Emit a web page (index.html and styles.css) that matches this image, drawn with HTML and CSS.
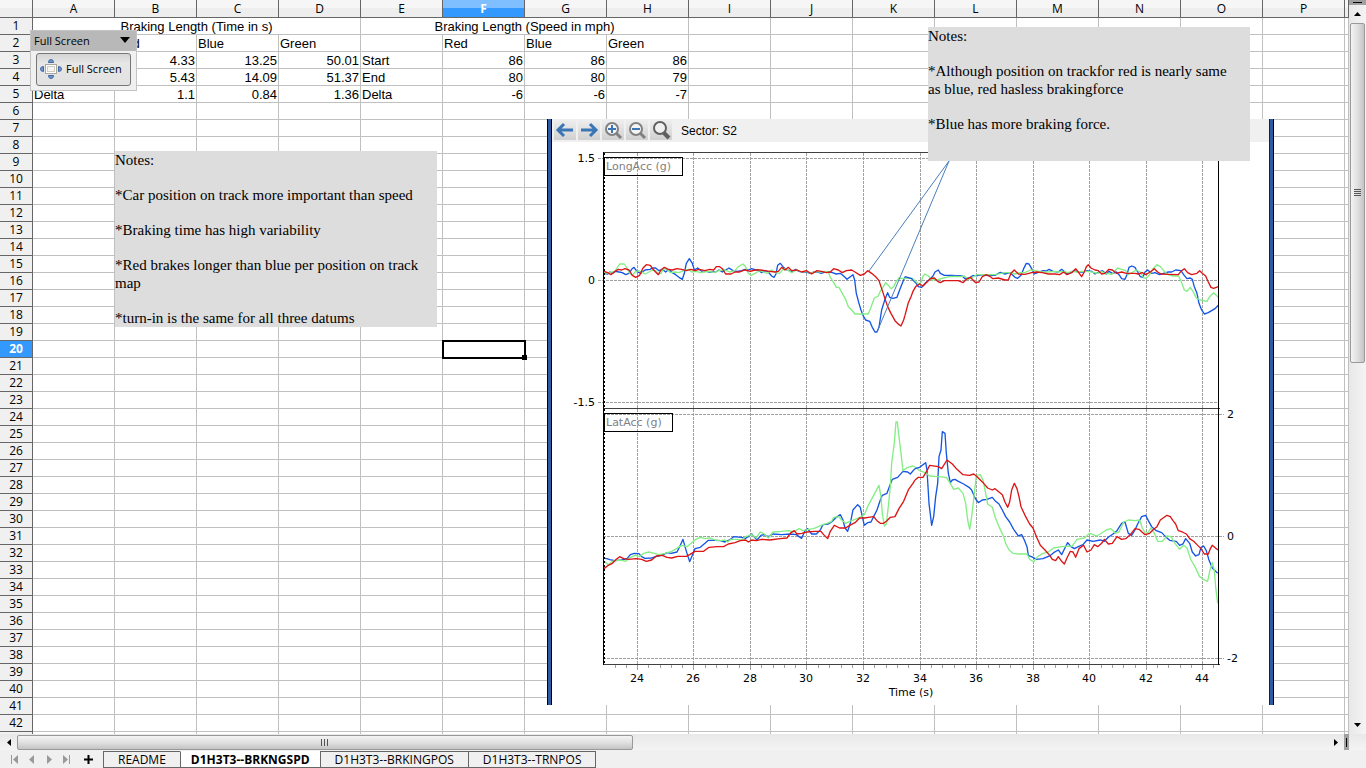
FILE: index.html
```
<!DOCTYPE html>
<html lang="en">
<head>
	<meta charset="UTF-8">
	<title>D1H3T3--BRKNGSPD</title>
	<meta name="viewport" content="width=device-width,initial-scale=1">
	<link rel="stylesheet" href="styles.css">
	<script src="sheet.js" defer></script>
</head>
<body>
	<div id="main">
		<!-- Sheet -->
		<div id="sheet">
			<table id="cells">
				<colgroup>
					<col class="head"><col><col><col><col><col><col><col><col>
					<col><col><col><col><col><col><col><col><col class="rest">
				</colgroup>
				<thead>
					<tr>
						<th></th><th>A</th><th>B</th><th>C</th><th>D</th><th>E</th><th class="current">F</th><th>G</th><th>H</th>
						<th>I</th><th>J</th><th>K</th><th>L</th><th>M</th><th>N</th><th>O</th><th>P</th><th></th>
					</tr>
				</thead>
				<tbody>
					<tr><th>1</th><td colspan="4" class="title">Braking Length (Time in s)</td><td colspan="4" class="title">Braking Length (Speed in mph)</td></tr>
					<tr><th>2</th><td></td><td>Red</td><td>Blue</td><td>Green</td><td></td><td>Red</td><td>Blue</td><td>Green</td></tr>
					<tr><th>3</th><td>Start</td><td class="num">4.33</td><td class="num">13.25</td><td class="num">50.01</td><td>Start</td><td class="num">86</td><td class="num">86</td><td class="num">86</td></tr>
					<tr><th>4</th><td>End</td><td class="num">5.43</td><td class="num">14.09</td><td class="num">51.37</td><td>End</td><td class="num">80</td><td class="num">80</td><td class="num">79</td></tr>
					<tr><th>5</th><td>Delta</td><td class="num">1.1</td><td class="num">0.84</td><td class="num">1.36</td><td>Delta</td><td class="num">-6</td><td class="num">-6</td><td class="num">-7</td></tr>
				</tbody>
			</table>

			<!-- Chart -->
			<div id="chart">
				<div class="chart-tools">
					<button aria-label="Previous"><svg width="22" height="22" viewBox="0 0 22 22"><path d="M19 11H5M10 5l-6 6 6 6" fill="none" stroke="#3a76b5" stroke-width="3"/></svg></button>
					<button aria-label="Next"><svg width="22" height="22" viewBox="0 0 22 22"><path d="M3 11h14M12 5l6 6-6 6" fill="none" stroke="#3a76b5" stroke-width="3"/></svg></button>
					<button aria-label="Zoom in"><svg width="22" height="22" viewBox="0 0 22 22"><g fill="none" stroke="#808080"><circle cx="10" cy="10" r="6" fill="#f4f4f4" stroke-width="2"/><path d="M14 14l5 5" stroke-width="3"/><path d="M6 10h8M10 6v8" stroke="#3a76b5" stroke-width="2"/></g></svg></button>
					<button aria-label="Zoom out"><svg width="22" height="22" viewBox="0 0 22 22"><g fill="none" stroke="#808080"><circle cx="10" cy="10" r="6" fill="#f4f4f4" stroke-width="2"/><path d="M14 14l5 5" stroke-width="3"/><path d="M6 10h8" stroke="#3a76b5" stroke-width="2"/></g></svg></button>
					<button aria-label="Zoom"><svg width="22" height="22" viewBox="0 0 22 22"><g fill="none" stroke="#606060"><circle cx="10" cy="9" r="6" fill="#f0f0f0" stroke-width="2"/><path d="M14 14l5 5" stroke-width="4"/></g></svg></button>
					<span>Sector: S2</span>
				</div>
				<svg class="plot" width="717" height="563" viewBox="552 142 717 563">
					<g class="grid">
						<path d="M637.5 153V664M693.5 153V664M750.5 153V664M806.5 153V664M863.5 153V664M920.5 153V664M976.5 153V664M1033.5 153V664M1089.5 153V664M1146.5 153V664M1202.5 153V664"/>
						<path d="M598 158.5H1218M598 280.5H1218M598 402.5H1218M603 414.5H1224M603 536.5H1224M603 658.5H1224"/>
					</g>
					<path class="ticks" d="M637.5 665v5M693.5 665v5M750.5 665v5M806.5 665v5M863.5 665v5M920.5 665v5M976.5 665v5M1033.5 665v5M1089.5 665v5M1146.5 665v5M1202.5 665v5"/>
					<path class="ticks" d="M615.5 665v3M626.5 665v3M648.5 665v3M660.5 665v3M671.5 665v3M682.5 665v3M705.5 665v3M716.5 665v3M727.5 665v3M739.5 665v3M761.5 665v3M773.5 665v3M784.5 665v3M795.5 665v3M818.5 665v3M829.5 665v3M841.5 665v3M852.5 665v3M874.5 665v3M886.5 665v3M897.5 665v3M908.5 665v3M931.5 665v3M942.5 665v3M954.5 665v3M965.5 665v3M988.5 665v3M999.5 665v3M1010.5 665v3M1022.5 665v3M1044.5 665v3M1055.5 665v3M1067.5 665v3M1078.5 665v3M1101.5 665v3M1112.5 665v3M1123.5 665v3M1135.5 665v3M1157.5 665v3M1168.5 665v3M1180.5 665v3M1191.5 665v3M1213.5 665v3"/>

					<!-- LongAcc, left and right half -->
					<g class="trace" transform="translate(595 250) scale(.3333)">
						<polyline class="blue" points="27,70 38,72 45,66 52,70 62,64 72,66 82,68 92,74 102,70 110,58 117,52 127,66 138,70 150,60 165,58 172,54 182,54 192,62 202,58 212,66 222,58 232,68 242,74 252,82 262,88 268,70 274,40 283,26 292,40 298,60 308,54 320,64 330,62 340,66 352,66 362,66 372,60 382,66 392,60 402,54 414,62 426,64 440,62 450,58 460,60 470,56 482,60 490,60 500,68 510,62 520,66 530,78 537,82 543,72 548,46 556,40 564,50 572,58 582,62 592,66 602,58 612,64 622,66 634,66 646,70 656,66 668,66 678,70 690,66 700,66 712,68 724,72 736,70 746,78 756,88 766,80 774,74 779,90 784,130 792,160 798,180 804,196 812,210 824,214 832,232 840,246 846,246 852,232 860,180 868,154 873,140 878,128 884,142 894,145 906,142 914,120 922,100 930,80"/>
						<polyline class="green" points="27,68 38,70 48,66 58,66 66,54 74,42 88,42 96,54 104,70 112,76 120,66 130,62 140,66 150,72 162,66 172,60 182,62 190,72 198,70 206,56 216,58 226,68 240,66 252,68 266,62 280,58 290,66 304,64 316,68 328,66 344,64 356,68 372,62 388,60 404,66 420,62 430,50 444,42 452,50 460,70 468,76 480,70 494,62 506,66 516,70 530,60 542,68 554,70 566,56 578,60 590,68 604,60 620,66 634,64 648,70 664,64 676,66 688,64 700,66 706,82 714,94 724,112 732,112 742,130 752,148 760,170 770,180 780,192 820,192 828,172 838,144 850,138 856,124 864,112 872,98 880,106 888,116 896,110 904,94 912,84 924,86 940,84 954,86"/>
						<polyline class="red" points="27,64 38,68 48,74 60,64 70,58 80,60 90,56 102,60 112,76 122,82 134,76 144,54 154,44 166,46 174,58 184,68 190,74 198,60 208,52 220,58 232,60 246,56 260,58 274,62 288,58 300,62 312,58 330,62 344,58 356,60 364,50 374,50 382,56 392,72 408,72 420,66 434,66 450,60 466,64 480,60 496,60 510,62 524,64 540,66 550,64 560,52 570,60 580,52 590,62 606,60 620,66 634,62 650,72 666,62 680,64 694,68 706,66 716,56 730,60 742,68 754,62 770,60 780,66 796,76 808,72 818,62 830,70 842,80 852,92 860,116 868,140 878,170 888,190 900,212 912,224 918,228 926,210 930,196"/>
					</g>
					<g class="trace" transform="translate(905 250) scale(.3333)">
						<polyline class="blue" points="0,80 20,86 32,98 40,110 50,112 60,100 72,90 84,78 90,66 100,60 106,70 118,76 140,76 172,78 180,86 192,84 204,77 218,77 232,74 250,77 270,76 286,67 300,72 314,68 322,74 330,82 338,85 348,76 356,56 364,40 372,42 380,56 388,72 400,67 414,62 424,63 432,58 444,64 460,66 470,58 480,66 488,72 498,68 508,62 522,66 534,66 546,62 560,64 570,72 582,66 592,62 604,72 612,64 622,70 634,66 642,74 650,86 660,88 666,74 672,52 680,48 690,52 698,66 706,80 714,82 720,66 728,60 740,70 750,68 764,74 776,70 790,66 800,66 812,60 828,62 836,74 846,86 856,84 862,88 868,110 876,130 882,160 890,180 898,192 910,188 920,182 930,176 940,166"/>
						<polyline class="green" points="24,86 34,96 40,102 48,98 54,78 60,72 70,78 80,90 100,88 116,84 132,80 150,79 166,80 178,78 190,88 206,80 214,74 240,74 270,74 300,68 314,68 330,72 344,68 360,68 376,60 390,62 410,66 430,66 450,64 460,66 474,64 490,68 500,64 516,66 530,64 545,64 560,66 578,70 590,64 602,72 612,70 620,74 630,62 638,54 650,58 662,62 670,74 684,66 694,60 706,66 716,84 724,84 734,74 744,56 756,44 766,50 778,64 790,74 804,78 820,78 828,92 838,120 846,124 856,112 864,124 874,144 886,150 906,154 914,140 926,128 940,142"/>
						<polyline class="red" points="0,196 10,158 18,140 24,124 32,110 44,102 54,108 66,96 76,86 88,84 98,94 106,98 118,92 140,92 160,92 174,98 184,88 196,82 206,92 212,98 222,96 232,80 244,74 256,80 264,86 280,84 300,90 310,90 318,70 328,60 340,72 360,73 380,68 396,66 412,68 430,72 450,72 464,74 476,66 486,74 500,68 512,56 520,66 530,80 538,66 544,50 550,44 558,54 570,60 580,62 590,72 600,70 612,58 622,60 634,70 650,66 664,70 690,70 700,72 712,68 722,74 736,66 748,56 758,66 768,72 790,73 820,74 830,62 838,56 848,68 860,74 876,70 884,62 892,70 902,78 910,96 918,112 926,115 940,110"/>
					</g>

					<!-- LatAcc, left and right half -->
					<g class="trace" transform="translate(595 400) scale(.3333)">
						<polyline class="blue" points="27,475 36,476 44,479 60,482 80,480 96,476 106,464 118,460 132,461 140,470 150,475 170,474 190,468 205,464 216,458 228,460 246,456 254,440 264,418 270,440 276,460 284,485 292,466 300,446 316,442 330,430 340,421 360,421 376,422 390,426 404,420 416,410 440,412 450,416 460,410 470,402 486,420 498,406 506,404 520,410 534,402 560,404 586,402 604,404 612,410 620,415 630,392 638,386 650,402 664,402 676,390 684,374 700,372 712,364 724,352 736,344 744,360 750,384 758,394 766,370 774,330 788,314 796,322 802,350 808,376 818,368 828,366 836,350 846,330 856,300 862,286 876,280 884,258 892,238 908,232 924,214 938,216 946,222 960,206"/>
						<polyline class="green" points="27,484 40,494 52,484 68,480 84,482 92,484 106,472 120,466 134,470 146,460 162,456 178,460 192,464 210,460 230,454 244,446 260,436 276,440 290,428 302,418 316,412 330,416 344,414 360,420 378,422 390,420 398,426 408,418 424,418 440,420 452,410 470,404 484,414 496,396 508,402 520,414 534,396 560,394 580,392 596,396 612,386 624,392 640,388 656,386 670,380 684,374 696,370 710,364 716,352 732,350 740,360 752,370 764,364 780,358 800,350 808,344 820,316 834,290 852,256 858,290 862,340 868,378 874,372 880,320 886,260 890,190 898,130 903,66 907,66 912,110 918,160 924,212 938,202 954,198 966,204 974,212"/>
						<polyline class="red" points="27,506 40,496 52,490 64,478 74,470 86,476 100,478 124,476 140,478 154,484 170,480 184,468 202,466 216,472 230,474 248,469 274,469 284,464 300,454 326,454 342,442 366,440 386,440 400,432 420,428 436,422 452,420 460,426 470,420 484,422 500,418 524,420 556,416 576,414 588,398 598,392 606,402 620,400 636,396 660,394 678,394 686,404 698,416 706,394 718,376 734,384 752,384 764,376 780,368 794,354 808,354 820,352 836,350 846,362 856,370 866,370 876,362 886,352 900,350 912,326 926,304 940,270 954,250 960,240"/>
					</g>
					<g class="trace" transform="translate(915 400) scale(.3333)">
						<polyline class="blue" points="0,206 14,202 24,194 32,188 36,210 42,310 50,376 56,350 62,290 68,250 72,170 78,150 82,95 90,100 94,160 100,220 106,248 112,240 120,238 130,244 146,252 162,262 170,270 180,294 190,308 202,300 216,298 232,292 240,302 252,312 262,330 272,350 284,366 296,388 310,408 320,404 328,420 336,440 340,466 354,472 364,478 384,476 404,468 416,458 430,450 440,464 448,448 458,428 468,440 478,446 490,440 504,434 516,420 534,424 556,420 568,424 580,412 594,402 606,392 620,370 630,366 640,400 650,406 660,390 668,372 680,350 692,346 700,362 710,380 724,392 740,398 752,410 764,421 784,424 794,436 804,432 812,416 824,430 832,456 842,468 852,464 858,442 866,438 874,452 882,480 892,504 900,512 908,520"/>
						<polyline class="green" points="14,212 30,218 44,228 70,230 94,232 106,250 116,268 130,264 144,280 152,310 158,360 164,388 170,350 178,280 184,226 196,224 204,240 212,280 218,312 232,322 240,350 252,380 266,410 272,430 282,450 294,460 310,462 336,462 344,478 356,486 366,472 380,462 400,456 416,444 440,440 472,438 486,418 508,414 524,400 544,408 556,402 574,390 588,386 602,400 612,396 626,366 640,360 660,362 674,360 682,384 692,402 700,396 708,384 718,400 728,424 742,424 756,408 768,410 780,430 794,448 806,436 816,444 828,480 840,500 854,530 868,540 878,544 884,514 892,488 898,510 902,560 908,610"/>
						<polyline class="red" points="0,240 10,232 24,232 36,212 44,196 70,200 80,206 96,180 112,192 126,208 144,224 164,226 176,222 184,228 196,240 206,250 218,264 232,270 240,266 252,276 262,284 270,306 278,322 284,306 290,270 298,250 306,266 312,290 318,320 330,346 344,372 354,384 366,414 376,436 390,450 404,466 412,478 422,482 430,470 440,484 448,492 456,474 466,454 474,456 482,472 492,446 506,436 516,456 528,450 538,434 548,440 560,430 568,418 580,432 592,430 606,410 620,418 632,416 646,404 660,386 672,388 690,404 704,400 716,388 726,380 736,360 756,346 766,350 774,362 782,372 790,392 802,396 814,402 824,416 836,424 846,434 858,446 868,462 880,462 886,446 892,436 904,446 910,450"/>
					</g>

					<path class="frame" d="M603 152.5H1219M603 408.5H1220M603 664.5H1220"/>
					<path class="axis" d="M603.5 152V665M1218.5 152V665"/>
					<path class="axis dots" d="M604.5 153V664"/>
					<rect class="label-box" x="604.5" y="157.5" width="78" height="18"/>
					<rect class="label-box" x="604.5" y="413.5" width="68" height="18"/>
					<path class="pointer" d="M949 161L869 271M949 161L877 332"/>

					<text class="label" x="606" y="170">LongAcc (g)</text>
					<text class="label" x="606" y="426">LatAcc (g)</text>
					<g text-anchor="end">
						<text x="595" y="162">1.5</text>
						<text x="595" y="284">0</text>
						<text x="595" y="406">-1.5</text>
					</g>
					<g>
						<text x="1227" y="418">2</text>
						<text x="1227" y="540">0</text>
						<text x="1227" y="662">-2</text>
					</g>
					<g text-anchor="middle">
						<text x="637" y="682">24</text>
						<text x="693" y="682">26</text>
						<text x="750" y="682">28</text>
						<text x="806" y="682">30</text>
						<text x="863" y="682">32</text>
						<text x="920" y="682">34</text>
						<text x="976" y="682">36</text>
						<text x="1033" y="682">38</text>
						<text x="1089" y="682">40</text>
						<text x="1146" y="682">42</text>
						<text x="1202" y="682">44</text>
						<text x="911" y="696">Time (s)</text>
					</g>
				</svg>
			</div>

			<!-- Notes -->
			<div class="notes" id="notes-time">
				<p>Notes:</p>
				<p>*Car position on track more important than speed</p>
				<p>*Braking time has high variability</p>
				<p>*Red brakes longer than blue per position on track map</p>
				<p>*turn-in is the same for all three datums</p>
			</div>
			<div class="notes" id="notes-force">
				<p>Notes:</p>
				<p>*Although position on trackfor red is nearly same as blue, red hasless brakingforce</p>
				<p>*Blue has more braking force.</p>
			</div>

			<!-- Full screen toolbar -->
			<div id="fullscreen">
				<button class="bar-title">Full Screen <svg width="10" height="6" viewBox="0 0 10 6"><path d="M0 0h10L5 6z"/></svg></button>
				<button class="bar-button">
					<svg width="22" height="20" viewBox="0 0 22 20">
						<g fill="#7397cb" stroke="#3f68a5">
							<path d="M8.500 3.500a2.500 3 0 0 1 5 0zM8.500 16.500a2.500 3 0 0 0 5 0zM3.500 7.500a3 2.500 0 0 0 0 5zM18.500 7.500a3 2.500 0 0 1 0 5z"/>
						</g>
						<rect x="5.500" y="5.500" width="11" height="9" fill="#fff" stroke="#aaa79c"/>
						<rect x="7.500" y="7.500" width="7" height="5" fill="#f6f6f0" stroke="#cfcdc4"/>
					</svg>
					Full Screen
				</button>
			</div>
		</div>

		<!-- Vertical scrollbar -->
		<div id="vscroll">
			<div class="split"></div>
			<button aria-label="Scroll up"><svg width="7" height="4" viewBox="0 0 7 4"><path d="M0 4l3.500-4L7 4z"/></svg></button>
			<div class="track"><div class="thumb"></div></div>
			<button aria-label="Scroll down"><svg width="7" height="4" viewBox="0 0 7 4"><path d="M0 0l3.500 4L7 0z"/></svg></button>
		</div>
	</div>

	<!-- Horizontal scrollbar -->
	<div id="hscroll">
		<button aria-label="Scroll left"><svg width="4" height="7" viewBox="0 0 4 7"><path d="M4 0L0 3.500 4 7z"/></svg></button>
		<div class="track"><div class="thumb"></div></div>
		<button aria-label="Scroll right"><svg width="4" height="7" viewBox="0 0 4 7"><path d="M0 0l4 3.500L0 7z"/></svg></button>
		<div class="split"></div>
	</div>

	<!-- Sheet tabs -->
	<div id="tabs">
		<div class="tab-nav">
			<button aria-label="First sheet"><svg width="8" height="9" viewBox="0 0 8 9"><path d="M0 0h1v9H0zM7 0v9L2 4.500z"/></svg></button>
			<button aria-label="Previous sheet"><svg width="8" height="9" viewBox="0 0 8 9"><path d="M6 0v9L1 4.500z"/></svg></button>
			<button aria-label="Next sheet"><svg width="8" height="9" viewBox="0 0 8 9"><path d="M2 0v9l5-4.500z"/></svg></button>
			<button aria-label="Last sheet"><svg width="8" height="9" viewBox="0 0 8 9"><path d="M1 0v9l5-4.500zM7 0h1v9H7z"/></svg></button>
		</div>
		<button class="add" aria-label="Add sheet"><svg width="9" height="9" viewBox="0 0 9 9"><path d="M0 4.500h9M4.500 0v9" stroke="#000" stroke-width="2"/></svg></button>
		<a href="#readme">README</a>
		<a href="#brkngspd" class="active">D1H3T3--BRKNGSPD</a>
		<a href="#brkingpos">D1H3T3--BRKINGPOS</a>
		<a href="#trnpos">D1H3T3--TRNPOS</a>
	</div>
</body>
</html>
```
FILE: styles.css
```
* {
	box-sizing: border-box;
}
body {
	margin: 0;
	height: 100vh;
	display: flex;
	flex-direction: column;
	overflow: hidden;
	background: #f0f0f0;
	color: #000;
	font: 12px "Open Sans", "Noto Sans", sans-serif;
}
button {
	border: 0;
	margin: 0;
	padding: 0;
	background: none;
	color: inherit;
	font: inherit;
	display: flex;
	align-items: center;
	justify-content: center;
}

#main {
	flex: 1;
	min-height: 0;
	display: flex;
}

/* Sheet */
#sheet {
	position: relative;
	flex: 1;
	min-width: 0;
	overflow: hidden;
	background: #fff;
}
#cells {
	width: 100%;
	table-layout: fixed;
	border-collapse: separate;
	border-spacing: 0;
}
col {
	width: 82px;
}
col.head {
	width: 33px;
}
col.rest {
	width: auto;
}
#cells th {
	height: 17px;
	padding: 0;
	border-right: solid 1px #666;
	border-bottom: solid 1px #666;
	background: #f0f0f0;
	font-weight: normal;
	line-height: 16px;
	text-align: center;
}
#cells thead th {
	height: 18px;
	background: linear-gradient(#f6f6f6 50%, #eee 50%);
}
#cells th.current {
	background: #39f;
	color: #fff;
	font-weight: bold;
}
#cells thead th.current {
	background: linear-gradient(#80bfff 50%, #39f 50%);
}
#cells td {
	height: 17px;
	padding: 2px 1px 0;
	border-right: solid 1px #c0c0c0;
	border-bottom: solid 1px #c0c0c0;
	font: 13px/14px "Liberation Sans", Arial, sans-serif;
	white-space: nowrap;
}
#cells td.title {
	text-align: center;
}
#cells td.num {
	text-align: right;
}
#cells td.cursor {
	position: relative;
	outline: solid 2px #000;
	outline-offset: -1px;
}
#cells td.cursor::after {
	content: "";
	position: absolute;
	right: -3px;
	bottom: -3px;
	width: 5px;
	height: 5px;
	background: #000;
}

/* Chart */
#chart {
	position: absolute;
	left: 547px;
	top: 119px;
	width: 727px;
	padding: 0 5px;
	background:
		linear-gradient(90deg, #000 1px, #2f5ba3 1px 4px, #000 4px) left / 5px 100% no-repeat,
		linear-gradient(90deg, #0c2348 1px, #2f5ba3 1px 4px, #000 4px) right / 5px 100% no-repeat,
		#fff;
}
.chart-tools {
	display: flex;
	gap: 2px;
	height: 23px;
	padding-left: 2px;
	background: #f0f0f0;
}
.chart-tools button {
	width: 22px;
	height: 21px;
	background: linear-gradient(#f0f0f0, #d0d0d0);
}
.chart-tools span {
	margin-left: 7px;
	font: 12px/25px "Liberation Sans", Arial, sans-serif;
}
.plot {
	display: block;
	font: 11px "DejaVu Sans", Verdana, sans-serif;
}
.grid path {
	fill: none;
	stroke: #a0a0a0;
	stroke-dasharray: 3 1;
}
.ticks {
	stroke: #a0a0a0;
}
.trace polyline {
	fill: none;
	stroke-width: 4;
	stroke-linejoin: round;
}
.trace .blue { stroke: #1455e6; }
.trace .green { stroke: #84ee84; }
.trace .red { stroke: #dc1414; }
.frame {
	stroke: #404040;
}
.axis {
	stroke: #000;
}
.dots {
	stroke-dasharray: 2 2;
}
.label-box {
	fill: none;
	stroke: #000;
}
.label {
	fill: #808080;
}
.pointer {
	fill: none;
	stroke: #4a7ebb;
}

/* Notes */
.notes {
	position: absolute;
	width: 322px;
	padding-right: 12px;
	background: #ddd;
	font: 15px/18px "Liberation Serif", "Times New Roman", serif;
}
.notes p {
	margin: 0 0 17px;
}
.notes p:last-child {
	margin: 0;
}
#notes-time {
	left: 115px;
	top: 151px;
}
#notes-force {
	left: 928px;
	top: 27px;
	padding-bottom: 28px;
}

/* Full screen toolbar */
#fullscreen {
	position: absolute;
	left: 30px;
	top: 30px;
	border: solid 1px #c4c4c4;
	background: #f0f0f0;
}
#fullscreen .bar-title {
	width: 100%;
	height: 20px;
	gap: 8px;
	padding: 0 6px 2px 3px;
	justify-content: space-between;
	background: #b8b8b8;
	font-size: 11px;
}
#fullscreen .bar-button {
	height: 33px;
	margin: 2px 5px 4px;
	padding: 0 8px 2px 3px;
	gap: 4px;
	border: solid 1px #777;
	border-radius: 3px;
	background: linear-gradient(#d4d4d4, #e6e6e6 30%, #e2e2e2);
	font-size: 11px;
}

/* Scrollbars */
#vscroll {
	width: 17px;
	display: flex;
	flex-direction: column;
	background: linear-gradient(90deg, #e8e8e8, #f4f4f4);
}
#vscroll .split {
	height: 5px;
	background: linear-gradient(#000, #000) center / 9px 1px no-repeat, #a0a0a0;
}
#vscroll button {
	height: 18px;
}
#vscroll .track,
#hscroll .track {
	flex: 1;
}
#vscroll .thumb {
	width: 15px;
	height: 49%;
	margin-left: 1px;
	border: solid 1px #999;
	border-radius: 2px;
	background:
		repeating-linear-gradient(#555 0 1px, transparent 1px 2px) center / 7px 7px no-repeat,
		linear-gradient(90deg, #f4f4f4, #e0e0e0 50%, #c4c4c4);
}
#hscroll {
	display: flex;
	height: 16px;
	background: linear-gradient(#e8e8e8, #f4f4f4);
}
#hscroll button {
	width: 17px;
}
#hscroll .thumb {
	width: 47%;
	height: 15px;
	margin-top: 1px;
	border: solid 1px #999;
	border-radius: 2px;
	background:
		repeating-linear-gradient(90deg, #555 0 1px, transparent 1px 3px) center / 7px 7px no-repeat,
		linear-gradient(#f4f4f4, #e0e0e0 50%, #c4c4c4);
}
#hscroll .split {
	width: 5px;
	margin-right: 17px;
	background: linear-gradient(#000, #000) center / 1px 9px no-repeat, #a0a0a0;
}

/* Sheet tabs */
#tabs {
	display: flex;
	height: 18px;
	padding: 1px 0 0 11px;
}
.tab-nav {
	display: flex;
	gap: 9px;
	fill: #999;
}
#tabs .add {
	width: 23px;
	margin: 0 3px 0 7px;
}
#tabs a {
	height: 17px;
	padding: 0 14px;
	border: solid 1px #666;
	margin-right: -1px;
	color: #000;
	font-size: 12px;
	line-height: 15px;
	text-decoration: none;
}
#tabs a.active {
	padding: 0 10px;
	border-top-color: #fff;
	background: #fff;
	font-weight: bold;
}
```
FILE: sheet.js
```
var COLUMNS = 17;
var ROWS = 42;
var CURRENT_ROW = 20;
var CURRENT_COLUMN = 6;

var body = document.querySelector('#cells tbody');

// pad the filled rows out to the last column
Array.from(body.rows).forEach(function (row) {
	var used = Array.from(row.cells).reduce(function (n, cell) {
		return n + cell.colSpan;
	}, -1);
	for (; used < COLUMNS; used++) row.insertCell();
});

// empty rows, plus an unnumbered one that runs under the scrollbar
for (var n = body.rows.length + 1; n <= ROWS + 1; n++) {
	var row = body.insertRow();
	var head = document.createElement('th');
	if (n <= ROWS) head.textContent = n;
	row.appendChild(head);
	for (var c = 1; c <= COLUMNS; c++) row.insertCell();
	if (n === CURRENT_ROW) {
		head.className = 'current';
		row.cells[CURRENT_COLUMN].className = 'cursor';
	}
}
```
